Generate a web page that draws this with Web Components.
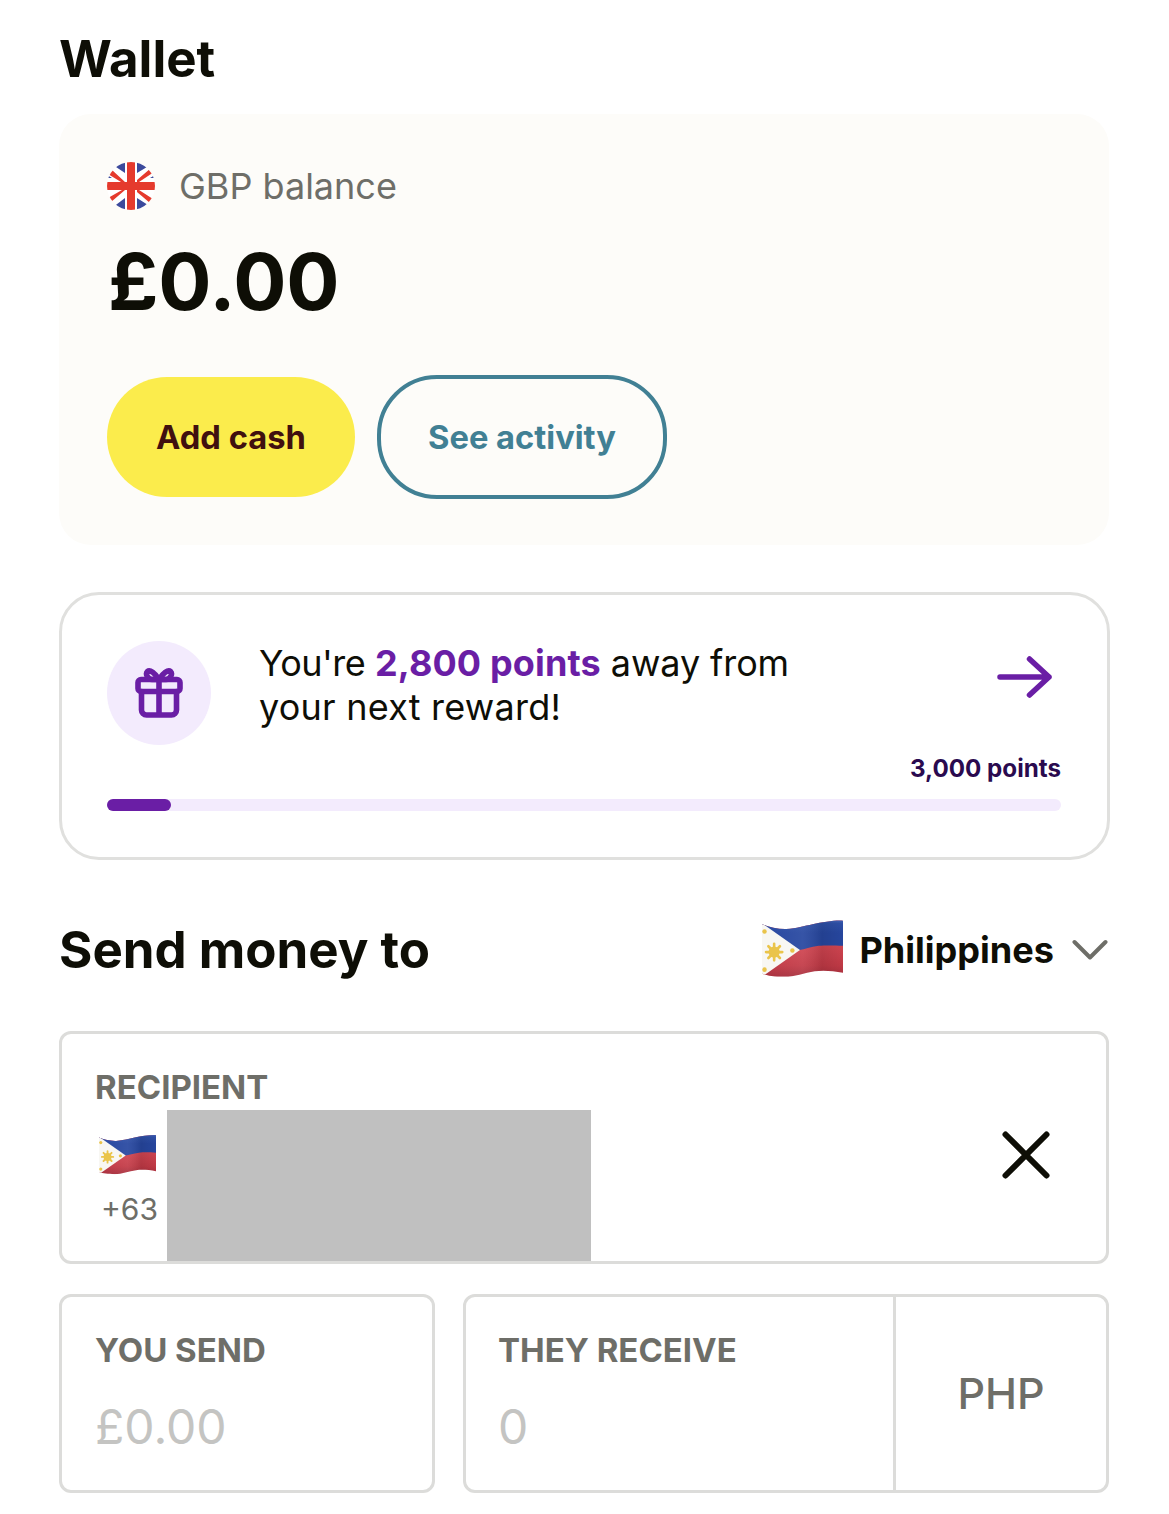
<!DOCTYPE html>
<html><head><meta charset="utf-8"><title>Wallet</title>
<style>
html,body{margin:0;background:#fff}
body{font-family:Inter,"Noto Sans",sans-serif;color:#0e0e06}
</style></head><body>
<wallet-page>
  <wallet-balance></wallet-balance>
  <reward-card></reward-card>
  <send-header></send-header>
  <recipient-field></recipient-field>
  <amount-row></amount-row>
</wallet-page>
<script>
const PH=(w,h)=>`<svg width="${w}" height="${h}" viewBox="0 0 80 60" preserveAspectRatio="none" style="display:block;flex:none">
<defs><linearGradient id="bl" x1="0" x2="0" y1="0" y2="1"><stop offset="0" stop-color="#4a6cc0"/><stop offset=".14" stop-color="#2f50a8"/><stop offset=".45" stop-color="#2747a0"/></linearGradient>
<linearGradient id="rd" x1="0" x2="0" y1="0" y2="1"><stop offset=".42" stop-color="#d24652"/><stop offset=".75" stop-color="#c23a46"/><stop offset=".95" stop-color="#a52f3d"/></linearGradient>
<linearGradient id="sh" x1="0" x2="1" y1="0" y2="0"><stop offset="0" stop-color="#fff" stop-opacity="0"/><stop offset=".5" stop-color="#fff" stop-opacity=".07"/><stop offset=".74" stop-color="#000" stop-opacity=".1"/><stop offset="1" stop-color="#000" stop-opacity=".02"/></linearGradient>
<clipPath id="fl"><path d="M0 5C8 8 16 9.800 24 9.600C34 9.300 42 6.500 50 5C60 3 72 1 80 1.600V52C70 50 60 49.500 52 50.500C42 52 32 56 22 56C12 56 6 55 0 53Z"/></clipPath></defs>
<g clip-path="url(#fl)"><rect width="80" height="60" fill="url(#rd)"/>
<path d="M0 0H80V26C70 25.500 62 25.500 56 26C48 27 42 29.500 37 30L0 30Z" fill="url(#bl)"/>
<rect width="80" height="60" fill="url(#sh)"/>
<path d="M0 4 37.500 30 0 56Z" fill="#f8f7f3"/>
<g fill="#eac44a"><circle cx="12" cy="32" r="5.500"/>
<g stroke="#eac44a" stroke-width="2.600" stroke-linecap="round"><path d="M12 24V40M4 32H20M6.300 26.300 17.700 37.700M6.300 37.700 17.700 26.300"/></g>
<circle cx="2.500" cy="12" r="2.200"/><circle cx="2.500" cy="49" r="2.200"/><circle cx="30" cy="30.500" r="2.200"/></g></g></svg>`;
const def=(n,html)=>customElements.define(n,class extends HTMLElement{constructor(){super();this.attachShadow({mode:'open'}).innerHTML=html}});

def('wallet-page',`<style>:host{display:block;box-sizing:border-box;width:1169px;height:1514px;padding:29px 60px 0 59px;overflow:hidden}
h1{margin:0 0 25px 0;font-size:51px;line-height:60px;font-weight:700;letter-spacing:0}</style>
<h1>Wallet</h1><slot></slot>`);

def('wallet-balance',`<style>:host{display:block;box-sizing:border-box;height:431px;background:#fdfcf9;border-radius:32px;padding:48px}
.top{display:flex;align-items:center;gap:24px;height:48px}
.lbl{font-size:36px;line-height:48px;color:#6e6e68}
.amt{font-size:79px;line-height:92px;font-weight:700;margin:25px 0 0 1px;letter-spacing:-.1px}
.btns{display:flex;gap:22px;margin-top:48px;align-items:center}
.b{box-sizing:border-box;height:120px;border-radius:60px;display:flex;align-items:center;justify-content:center;font-size:32.700px;font-weight:650}
.y{width:248px;background:#fbec4c;color:#40100f}
.o{width:290px;height:124px;border:4px solid #418094;color:#418094}
</style>
<div class="top"><svg width="48" height="48" viewBox="0 0 48 48" style="flex:none;display:block"><defs><clipPath id="c"><circle cx="24" cy="24" r="24"/></clipPath></defs>
<g clip-path="url(#c)"><rect width="48" height="48" fill="#fff"/>
<path d="M7.500 4 18 -1V11ZM30 -1 40 5 30 11ZM7.500 44 18 36V49ZM30 36 41 43 30 49ZM0 16H5L0 13ZM48 16H43L48 13Z" fill="#3c4a9c"/>
<path d="M1 12 5 8 18 20H14ZM47 10 44 6 30 18V20H32ZM1 36 4 40 18 28H15ZM46 37 43 41 30 30V28H32Z" fill="#e53a2d"/>
<path d="M20 0H28V20H48V28H28V48H20V28H0V20H20Z" fill="#e53a2d"/></g></svg>
<span class="lbl">GBP balance</span></div>
<div class="amt">£0.00</div>
<div class="btns"><div class="b y">Add cash</div><div class="b o">See activity</div></div>`);

def('reward-card',`<style>:host{display:block;box-sizing:border-box;height:268px;margin:47px -1px 0 0;border:3px solid #e0e0de;border-radius:40px;padding:46px 46px 0 45px}
.row{display:flex;align-items:flex-start;height:104px}
.ic{width:104px;height:104px;border-radius:50%;background:#f3ebfd;flex:none;display:flex;align-items:center;justify-content:center}
.t{margin-left:48px;font-size:36px;line-height:44px;flex:1;letter-spacing:.23px}
.y{letter-spacing:-.5px}.w{letter-spacing:-.1px}
b{color:#6a1ea5;font-weight:650;letter-spacing:.14px}
.ar{margin:15px 9px 0 0;flex:none;display:block}
.pts{text-align:right;font-size:24.200px;line-height:33px;font-weight:650;color:#2a0a4f;margin-top:7px}
.bar{height:12px;border-radius:6px;background:#f3ebfd;margin-top:14px;display:flex}
.bar i{display:block;width:64px;border-radius:6px;background:#6a1ea5}
</style>
<div class="row"><div class="ic"><svg width="48" height="50" viewBox="0 0 48 50" fill="none" stroke="#6a1ea5" stroke-width="5.600" stroke-linejoin="round" stroke-linecap="round" style="display:block">
<rect x="3" y="11.500" width="42" height="12" rx="3"/><path d="M6.500 23.500V42a5 5 0 0 0 5 5H36.500a5 5 0 0 0 5-5V23.500M24 11.500V47"/>
<path d="M24 11.500C20 5 15 1.500 12.500 3.500C10 6 13 11.500 17 11.500ZM24 11.500C28 5 33 1.500 35.500 3.500C38 6 35 11.500 31 11.500Z"/></svg></div>
<div class="t"><span class="y">You're </span><b>2,800 points</b><span class="w"> away from</span><br>your next reward!</div>
<svg class="ar" width="56" height="42" viewBox="0 0 56 42" fill="none" stroke="#6a1ea5" stroke-width="5.500" stroke-linecap="round" stroke-linejoin="round"><path d="M4 21H53M33.500 3 53 21 33.500 39"/></svg></div>
<div class="pts">3,000 points</div>
<div class="bar"><i></i></div>`);

def('send-header',`<style>:host{display:flex;align-items:center;height:64px;margin-top:58px;padding-right:1px}
h2{margin:0;font-size:51px;line-height:64px;font-weight:650;flex:1}
.n{font-size:36.100px;font-weight:650;margin-left:16px}
svg.c{margin-left:18px;display:block}
</style><h2>Send money to</h2>${PH(81,62)}<span class="n">Philippines</span>
<svg class="c" width="36" height="22" viewBox="0 0 36 22" fill="none" stroke="#6e6e68" stroke-width="4" stroke-linecap="round" stroke-linejoin="round"><path d="M2.500 3 18 18.500 33.500 3"/></svg>`);

def('recipient-field',`<style>:host{display:block;box-sizing:border-box;height:233px;margin-top:49px;border:3px solid #dcdcda;border-radius:12px;position:relative;padding:33px 0 0 33px}
.l{font-size:33px;line-height:40px;font-weight:700;color:#6e6e68}
.r{display:flex;height:151px;margin-top:3px}
.cc{width:72px;flex:none;color:#6e6e68;font-size:30px;line-height:36px;padding-top:24px;box-sizing:border-box}
.cc svg{margin-left:4px}.cc span{display:block;margin:14px 0 0 6px}
.red{width:424px;background:#c0c0c0}
.x{position:absolute;right:56px;top:97px;display:block}
</style><div class="l">RECIPIENT</div>
<div class="r"><div class="cc">${PH(57,43)}<span>+63</span></div><div class="red"></div></div>
<svg class="x" width="48" height="48" viewBox="0 0 48 48" fill="none" stroke="#0e0e06" stroke-width="6" stroke-linecap="round"><path d="M3.500 3.500 44.500 44.500M44.500 3.500 3.500 44.500"/></svg>`);

def('amount-row',`<style>:host{display:flex;gap:28px;margin-top:30px;height:199px}
.f{box-sizing:border-box;border:3px solid #dcdcda;border-radius:12px;height:199px;display:flex}
.a{width:376px}.b{width:646px}
.c{padding:33px 0 0 33px;flex:1}
.b .c{padding-left:32px}
.l{font-size:33px;line-height:40px;font-weight:700;color:#6e6e68}
.v{font-size:48px;line-height:60px;color:#c4c4c2;margin-top:27px}
.cur{width:213px;flex:none;border-left:3px solid #dcdcda;box-sizing:border-box;display:flex;align-items:center;justify-content:center;font-size:43px;font-weight:500;color:#6e6e68;padding-bottom:2px}
</style>
<div class="f a"><div class="c"><div class="l">YOU SEND</div><div class="v">£0.00</div></div></div>
<div class="f b"><div class="c"><div class="l">THEY RECEIVE</div><div class="v">0</div></div><div class="cur">PHP</div></div>`);
</script></body></html>
